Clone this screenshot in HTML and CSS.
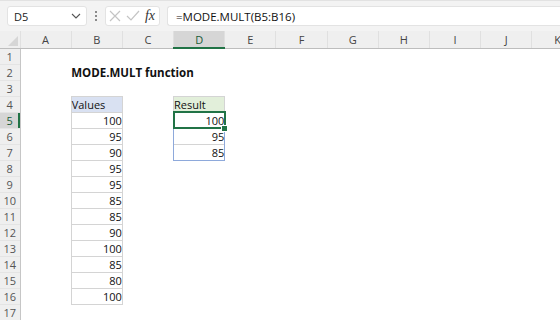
FILE: index.html
```html
<!DOCTYPE html>
<html>
<head>
<meta charset="utf-8">
<link rel="stylesheet" href="styles.css">
</head>
<body>
<div class="app">
  <div class="toolbar">
    <div class="namebox">
      <span class="name">D5</span>
      <svg class="chev" width="10" height="6" viewBox="0 0 10 6"><path d="M1 1 L5 5 L9 1" fill="none" stroke="#555" stroke-width="1.1"/></svg>
    </div>
    <div class="dots"><span></span><span></span><span></span></div>
    <div class="btns">
      <svg width="14" height="14" viewBox="0 0 14 14"><path d="M2 2 L12 12 M12 2 L2 12" stroke="#c4c4c4" stroke-width="1.2" fill="none"/></svg>
      <svg width="16" height="14" viewBox="0 0 16 14"><path d="M2 7 L6 11 L14 2" stroke="#c4c4c4" stroke-width="1.2" fill="none"/></svg>
      <span class="fx">fx</span>
    </div>
    <div class="formula">=MODE.MULT(B5:B16)</div>
  </div>
  <table class="sheet">
    <colgroup>
      <col class="c-rh"><col class="c"><col class="c"><col class="c"><col class="c"><col class="c"><col class="c"><col class="c"><col class="c"><col class="c"><col class="c"><col class="c">
    </colgroup>
    <thead>
      <tr class="hdr">
        <th class="corner"><svg width="12" height="12" viewBox="0 0 12 12"><path d="M11 1 L11 11 L1 11 Z" fill="#d6d6d6"/></svg></th>
        <th>A</th><th>B</th><th>C</th><th class="sel">D</th><th>E</th><th>F</th><th>G</th><th>H</th><th>I</th><th>J</th><th>K</th>
      </tr>
    </thead>
    <tbody>
      <tr><th>1</th><td></td><td></td><td></td><td></td><td></td><td></td><td></td><td></td><td></td><td></td><td></td></tr>
      <tr><th>2</th><td></td><td colspan="3" class="title">MODE.MULT function</td><td></td><td></td><td></td><td></td><td></td><td></td><td></td></tr>
      <tr><th>3</th><td></td><td></td><td></td><td></td><td></td><td></td><td></td><td></td><td></td><td></td><td></td></tr>
      <tr><th>4</th><td></td><td class="box vh">Values</td><td></td><td class="box rh">Result</td><td></td><td></td><td></td><td></td><td></td><td></td><td></td></tr>
      <tr><th class="sel">5</th><td></td><td class="box num">100</td><td></td><td class="num active">100</td><td></td><td></td><td></td><td></td><td></td><td></td><td></td></tr>
      <tr><th>6</th><td></td><td class="box num">95</td><td></td><td class="num spill">95</td><td></td><td></td><td></td><td></td><td></td><td></td><td></td></tr>
      <tr><th>7</th><td></td><td class="box num">90</td><td></td><td class="num spill last">85</td><td></td><td></td><td></td><td></td><td></td><td></td><td></td></tr>
      <tr><th>8</th><td></td><td class="box num">95</td><td></td><td></td><td></td><td></td><td></td><td></td><td></td><td></td><td></td></tr>
      <tr><th>9</th><td></td><td class="box num">95</td><td></td><td></td><td></td><td></td><td></td><td></td><td></td><td></td><td></td></tr>
      <tr><th>10</th><td></td><td class="box num">85</td><td></td><td></td><td></td><td></td><td></td><td></td><td></td><td></td><td></td></tr>
      <tr><th>11</th><td></td><td class="box num">85</td><td></td><td></td><td></td><td></td><td></td><td></td><td></td><td></td><td></td></tr>
      <tr><th>12</th><td></td><td class="box num">90</td><td></td><td></td><td></td><td></td><td></td><td></td><td></td><td></td><td></td></tr>
      <tr><th>13</th><td></td><td class="box num">100</td><td></td><td></td><td></td><td></td><td></td><td></td><td></td><td></td><td></td></tr>
      <tr><th>14</th><td></td><td class="box num">85</td><td></td><td></td><td></td><td></td><td></td><td></td><td></td><td></td><td></td></tr>
      <tr><th>15</th><td></td><td class="box num">80</td><td></td><td></td><td></td><td></td><td></td><td></td><td></td><td></td><td></td></tr>
      <tr><th>16</th><td></td><td class="box num">100</td><td></td><td></td><td></td><td></td><td></td><td></td><td></td><td></td><td></td></tr>
      <tr><th>17</th><td></td><td></td><td></td><td></td><td></td><td></td><td></td><td></td><td></td><td></td><td></td></tr>
    </tbody>
  </table>
</div>
</body>
</html>
```
FILE: styles.css
```css
* { box-sizing: border-box; }
html, body { margin: 0; padding: 0; background: #fff; }
body { width: 560px; height: 320px; overflow: hidden; font-family: "Open Sans", "Liberation Sans", sans-serif; }
.app { width: 560px; }
.toolbar {
  height: 31px;
  background: #f3f3f3;
  border-top: 1px solid #e2e2e2;
  display: flex;
  align-items: center;
  padding: 0 0 0 7px;
}
.namebox {
  width: 80px; height: 20px;
  background: #fff;
  border: 1px solid #e3e3e3;
  border-radius: 3px;
  display: flex; align-items: center; justify-content: space-between;
  padding: 0 5px 0 6px;
  font-size: 11px; color: #222;
}
.dots { width: 18px; display: flex; flex-direction: column; align-items: center; gap: 2px; }
.dots span { width: 2px; height: 2px; background: #8a8a8a; display: block; }
.btns {
  width: 55px; height: 20px;
  background: #fff;
  border: 1px solid #e3e3e3;
  border-radius: 3px;
  display: flex; align-items: center; justify-content: space-between;
  padding: 0 4px 0 2px;
}
.fx { font-family: "Liberation Serif", serif; font-style: italic; font-size: 14px; color: #333; line-height: 1; }
.formula {
  flex: 1; margin-left: 7px; height: 20px;
  background: #fff;
  border: 1px solid #e3e3e3; border-right: none;
  border-radius: 3px 0 0 3px;
  font-size: 11.5px; color: #111;
  display: flex; align-items: center; padding-left: 8px;
}
.sheet {
  border-collapse: collapse;
  table-layout: fixed;
  width: 583px;
  font-size: 11px;
  color: #111;
}
.c-rh { width: 20px; }
.c { width: 51.2px; }
.sheet th, .sheet td { height: 16px; padding: 0; line-height: 15px; white-space: nowrap; }
.hdr th {
  height: 17px;
  background: #efefef;
  font-weight: normal; color: #444;
  border-bottom: 1px solid #bdbdbd;
  border-left: 1px solid #e0e0e0;
}
.hdr th.corner { border-left: none; text-align: right; vertical-align: bottom; padding: 0 1px 1px 0; }
.hdr th.corner svg { display: block; margin-left: auto; }
.hdr th.sel { background: #d6d6d6; color: #185c37; border-bottom: 2px solid #217346; }
tbody th {
  background: #efefef; font-weight: normal; color: #555;
  border-right: 1px solid #c6c6c6;
  border-top: 1px solid #e4e4e4;
  text-align: center;
}
tbody th.sel { background: #d6d6d6; color: #185c37; box-shadow: inset -2px 0 0 #217346; }
.title { font-weight: bold; padding-left: 2px; font-size: 11.5px; overflow: visible; }
.box { border: 1px solid #d4d4d4; }
.vh { background: #d9e1f2; padding-left: 3px; }
.rh { background: #e2efda; padding-left: 3px; }
.num { text-align: right; padding-right: 3px; }
.active { position: relative; border: 1px solid #d4d4d4; }
.active::before {
  content: ""; position: absolute; left: -1px; top: -2px; right: -2px; bottom: -1px;
  border: 2px solid #217346;
}
.active::after {
  content: ""; position: absolute; right: -4px; bottom: -4px; width: 5px; height: 5px;
  background: #217346; border: 1px solid #fff;
}
.spill { border-left: 1px solid #8ea9db; border-right: 1px solid #8ea9db; border-top: 1px solid #d4d4d4; }
.spill.last { border-bottom: 1px solid #8ea9db; }
```
